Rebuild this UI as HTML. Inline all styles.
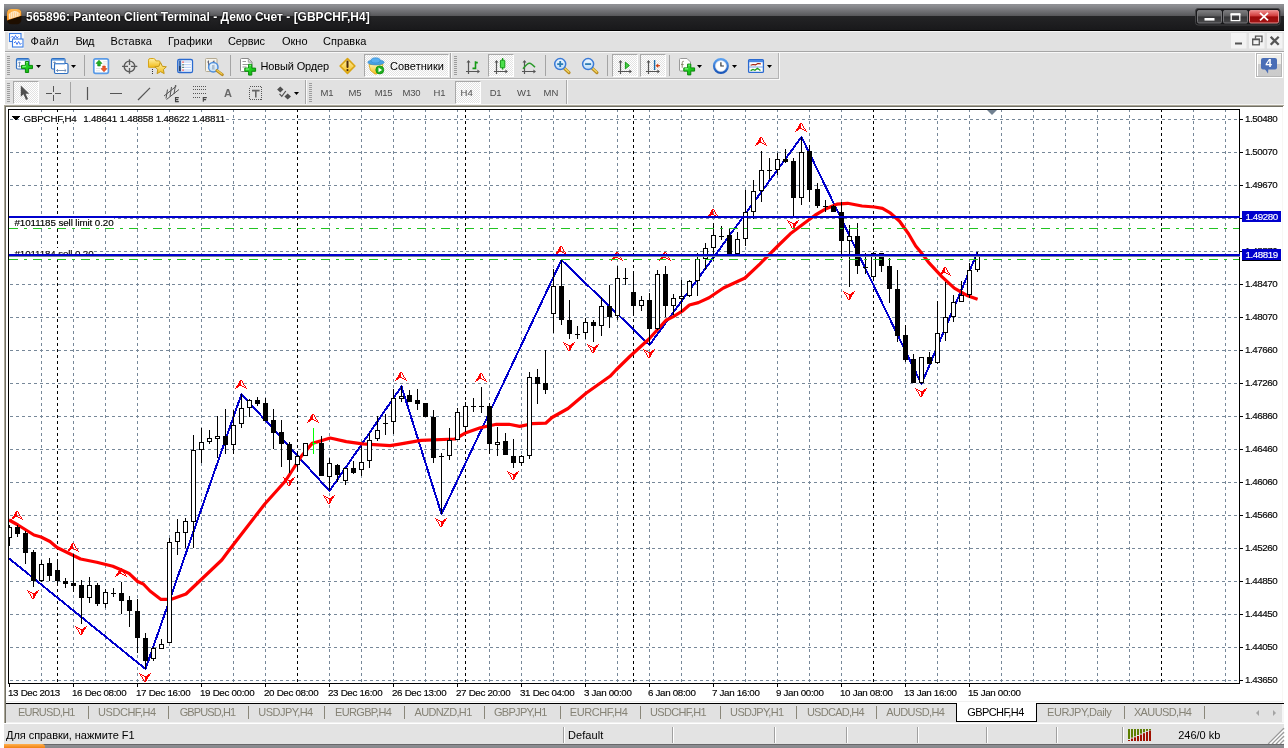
<!DOCTYPE html>
<html><head><meta charset="utf-8"><title>565896: Panteon Client Terminal</title>
<style>
html,body{margin:0;padding:0;background:#fff;}
body{width:1288px;height:748px;overflow:hidden;position:relative;font-family:"Liberation Sans",sans-serif;font-size:11px;color:#000;}
div,span{position:absolute;white-space:nowrap;box-sizing:border-box;}
#title{left:4px;top:4px;width:1280px;height:27px;background:linear-gradient(#8d8e92 0,#909195 1px,#59595c 11.5px,#555558 12px,#242426 12px,#19191b 25.5px,#000 26px,#000 27px);}
#ttext{left:26px;top:9px;font-size:12px;font-weight:bold;color:#fff;line-height:16px;text-shadow:0 0 2px #000,0 0 1px #000;}
#menu{left:5px;top:31px;width:1279px;height:20px;background:#e1e1e1;border-top:1px solid #f6f6f6;}
.mi{top:35px;line-height:13px;font-size:11px;}
#tb{left:5px;top:51px;width:1279px;height:54px;background:#e1e1e1;}
.ct{font-size:9.8px;line-height:11px;letter-spacing:-0.42px;-webkit-text-stroke:0.15px currentColor;}
.pl{left:1242px;width:39px;height:11px;background:#0000cd;color:#fff;font-size:9.8px;line-height:12px;padding-left:3.5px;letter-spacing:-0.42px;-webkit-text-stroke:0.15px currentColor;}
.chk{background-color:#f2f2f2;background-image:repeating-conic-gradient(#fff 0 25%,#e2e2e2 0 50%);background-size:2px 2px;border:1px solid;border-color:#a8a8a8 #fff #fff #a8a8a8;}
.grip{width:3px;background:repeating-linear-gradient(#9c9c9c 0,#9c9c9c 1px,transparent 1px,transparent 2px);}
.tf{top:87px;font-size:9.5px;line-height:11px;color:#4c4c4c;}
.tl{top:60px;font-size:11px;line-height:13px;}
.tab{top:706px;font-size:11px;line-height:13px;color:#858275;}
.tsep{top:706px;width:1px;height:13px;background:#8a877a;}
.ssep{top:727px;width:2px;height:16px;border-left:1px solid #a0a0a0;border-right:1px solid #fff;}
.st{top:729px;font-size:11px;line-height:13px;}
</style></head><body><div id="root" style="left:0;top:0;width:1288px;height:748px;will-change:transform">
<div id="title"></div>
<div id="ttext" class="fit">565896: Panteon Client Terminal - Демо Счет - [GBPCHF,H4]</div>
<svg width="1288" height="110" viewBox="0 0 1288 110" style="position:absolute;left:0;top:0;"><defs>
<linearGradient id="og" x1="0" y1="0" x2="0" y2="1"><stop offset="0" stop-color="#ffb64d"/><stop offset="1" stop-color="#f7901e"/></linearGradient>
<linearGradient id="bg1" x1="0" y1="0" x2="0" y2="1"><stop offset="0" stop-color="#7e7e80"/><stop offset=".45" stop-color="#5a5a5c"/><stop offset=".5" stop-color="#363638"/><stop offset="1" stop-color="#48484a"/></linearGradient>
<linearGradient id="bg2" x1="0" y1="0" x2="0" y2="1"><stop offset="0" stop-color="#f08a8a"/><stop offset=".45" stop-color="#cf3a3a"/><stop offset=".5" stop-color="#9c0a0a"/><stop offset="1" stop-color="#a01414"/></linearGradient>
</defs>
<rect x="7" y="9" width="14.4" height="15.2" rx="4.4" fill="#1e0e00"/>
<path d="M7 20.6V13.4Q7 9 11.4 9H17Q21.4 9 21.4 13.4V15.8Z" fill="url(#og)"/>
<path d="M8.8 19.2V14Q14.2 8.6 19.6 13.2V16Z" fill="#fff0d8" opacity=".9"/>
<path d="M10.6 13.2V18.4M12.6 12.4V17.8M14.6 12.2V17.2M16.6 12.5V16.6M18.4 13.4V16.2" stroke="#ffb860" stroke-width=".6"/>
<rect x="1195.5" y="8.5" width="84.5" height="16.5" rx="2.6" fill="#19191b" stroke="#444446" stroke-width="1"/>
<rect x="1197.5" y="10.5" width="24" height="12.5" rx="1.4" fill="url(#bg1)" stroke="#77777a" stroke-width="1"/>
<rect x="1223.5" y="10.5" width="24" height="12.5" rx="1.4" fill="url(#bg1)" stroke="#77777a" stroke-width="1"/>
<rect x="1249.5" y="10.5" width="29" height="12.5" rx="1.4" fill="url(#bg2)" stroke="#e89090" stroke-width="1"/>
<rect x="1204.5" y="18" width="10" height="2.6" fill="#fff"/>
<path d="M1231.2 14.5h8.6v6.2h-8.6z" fill="none" stroke="#fff" stroke-width="1.3"/><path d="M1230.6 14.2h9.8" stroke="#fff" stroke-width="2"/>
<path d="M1260 12.9l8 7.4M1268 12.9l-8 7.4" stroke="#fff" stroke-width="1.8" fill="none"/>
</svg>
<div id="menu"></div>
<div class="mi fit" style="letter-spacing:0.363px;left:30.5px">Файл</div>
<div class="mi fit" style="letter-spacing:-0.469px;left:75.5px">Вид</div>
<div class="mi fit" style="letter-spacing:0.087px;left:110.5px">Вставка</div>
<div class="mi fit" style="letter-spacing:0.109px;left:168px">Графики</div>
<div class="mi fit" style="letter-spacing:-0.112px;left:228px">Сервис</div>
<div class="mi fit" style="letter-spacing:-0.016px;left:282px">Окно</div>
<div class="mi fit" style="letter-spacing:0.049px;left:323px">Справка</div>
<svg width="1288" height="110" viewBox="0 0 1288 110" style="position:absolute;left:0;top:0;">
<rect x="8" y="32" width="16" height="17" fill="#f5f5f5"/>
<rect x="9.5" y="33.5" width="11.5" height="8" fill="#fff" stroke="#3a7ce4" stroke-width="1.1"/>
<path d="M11 37.5l1.5-1.5 1.5 2.5 1.5-3 1.5 2.5 1.5-1.5" stroke="#2e6cf0" stroke-width=".9" fill="none"/>
<rect x="12.5" y="39" width="10.5" height="8" fill="#fff" stroke="#3a7ce4" stroke-width="1.1"/>
<path d="M14 43l1.5-1.5 1.5 3 1.6-3 1.6 3 1.3-1.5" stroke="#2e6cf0" stroke-width=".9" fill="none"/>
<rect x="1231" y="33" width="15.5" height="15.5" fill="#f3f3f3"/><rect x="1249" y="33" width="15.5" height="15.5" fill="#f3f3f3"/><rect x="1267" y="33" width="15.5" height="15.5" fill="#f3f3f3"/>
<rect x="1235" y="42.5" width="7" height="2" fill="#555"/>
<path d="M1255.5 38.8v-2.6h6.5v5.5h-1.5" fill="none" stroke="#555" stroke-width="1.3"/><rect x="1252.7" y="39.5" width="6.6" height="5.3" fill="none" stroke="#555" stroke-width="1.3"/><path d="M1252 39.3h8" stroke="#555" stroke-width="1.6"/>
<path d="M1270.7 36.7l8 8M1278.7 36.7l-8 8" stroke="#555" stroke-width="2.3" fill="none"/>
</svg>
<div id="tb"></div>
<div style="left:5px;top:51px;width:1279px;height:1px;background:#a5a5a5"></div>
<div style="left:5px;top:52px;width:1279px;height:1px;background:#f8f8f8"></div>
<div style="left:5px;top:78px;width:774px;height:1px;background:#b4b4b4"></div>
<div style="left:5px;top:79px;width:775px;height:1px;background:#f8f8f8"></div>
<div style="left:778px;top:53px;width:1px;height:26px;background:#b4b4b4"></div>
<div style="left:779px;top:53px;width:1px;height:27px;background:#f8f8f8"></div>
<div style="left:566px;top:80px;width:1px;height:24px;background:#a8a8a8"></div>
<div style="left:567px;top:80px;width:1px;height:24px;background:#f8f8f8"></div>
<div style="left:5px;top:104px;width:1279px;height:1px;background:#f4f4f4"></div>
<div style="left:4px;top:105px;width:1280px;height:1px;background:#aca899"></div>
<div style="left:5px;top:106px;width:1278px;height:1px;background:#716f64"></div>
<div style="left:4px;top:105px;width:1px;height:618px;background:#aca899"></div>
<div style="left:5px;top:106px;width:1px;height:617px;background:#716f64"></div>
<div style="left:1282px;top:107px;width:1px;height:596px;background:#f7f7f5"></div>
<div class="grip" style="left:7px;top:56px;height:19px"></div>
<div class="grip" style="left:454px;top:56px;height:19px"></div>
<div class="grip" style="left:7px;top:83px;height:19px"></div>
<div class="grip" style="left:309px;top:83px;height:19px"></div>
<div class="chk" style="left:364px;top:54px;width:85px;height:23px"></div>
<div class="chk" style="left:488px;top:54px;width:26px;height:23px"></div>
<div class="chk" style="left:612px;top:54px;width:26px;height:23px"></div>
<div class="chk" style="left:640px;top:54px;width:26px;height:23px"></div>
<div class="chk" style="left:13px;top:81px;width:26px;height:23px"></div>
<div class="chk" style="left:455px;top:81px;width:26px;height:23px"></div>
<div style="left:1255px;top:52px;width:28px;height:26px;background:#fff"></div><div style="left:1256px;top:53px;width:26px;height:24px;background:linear-gradient(#f0efeb 0,#efeeea 45%,#cdcdcd 45%,#cbcbcb 100%);border:1px solid #b6b6b6;box-shadow:inset 1px 1px 0 #fff"></div>
<div class="tl fit" style="letter-spacing:-0.145px;left:260.5px">Новый Ордер</div>
<div class="tl fit" style="letter-spacing:0.028px;left:390px">Советники</div>
<div class="fit" style="letter-spacing:-0.553px;left:224px;top:87px;font-size:11px;line-height:13px;color:#6a6a6a;font-weight:bold">A</div>
<div style="left:1265.6px;top:57px;font-size:11.5px;font-weight:bold;line-height:13px;color:#fff;z-index:5">4</div>
<svg width="1288" height="110" viewBox="0 0 1288 110" style="position:absolute;left:0;top:0;"><defs>
<linearGradient id="gp" x1="0" y1="0" x2="1" y2="1"><stop offset="0" stop-color="#5cf05c"/><stop offset=".5" stop-color="#1fd01f"/><stop offset="1" stop-color="#0aa00a"/></linearGradient>
<linearGradient id="yg" x1="0" y1="0" x2="0" y2="1"><stop offset="0" stop-color="#fff2a8"/><stop offset="1" stop-color="#f2bc1a"/></linearGradient>
<linearGradient id="bl" x1="0" y1="0" x2="0" y2="1"><stop offset="0" stop-color="#5aa0f0"/><stop offset="1" stop-color="#1a56b8"/></linearGradient>
<linearGradient id="lens" x1="0" y1="0" x2="0" y2="1"><stop offset="0" stop-color="#f0f8ff"/><stop offset="1" stop-color="#bcdcf8"/></linearGradient>
</defs><rect x="16.5" y="58.5" width="12.5" height="10.5" rx="1.2" fill="#fff" stroke="#2f6fc0" stroke-width="1.2"/><rect x="17" y="59" width="11.5" height="1.6" fill="#5a98e0"/><path d="M19.5 62v5M18.2 63.3l1.3-1.5 1.3 1.5M18.2 65.7l1.3 1.5 1.3-1.5" stroke="#6a88b0" stroke-width=".9" fill="none"/><path d="M25.4 61.5h3.2v3.9h3.9v3.2h-3.9v3.9h-3.2v-3.9h-3.9v-3.2h3.9z" fill="url(#gp)" stroke="#0b8a0b" stroke-width="1" stroke-linejoin="round"/><path d="M26.299999999999997 62.5h1.4000000000000001M22.5 66.30000000000001h3.4" stroke="#9dff9d" stroke-width=".9" fill="none"/><path d="M36 65h5l-2.5 3z" fill="#000"/><rect x="51.5" y="58.5" width="13.5" height="10.5" rx="1.2" fill="#fff" stroke="#2f6fc0" stroke-width="1.2"/><rect x="52" y="59" width="12.5" height="1.6" fill="#5a98e0"/><path d="M54.5 62v3.5M53.3 63l1.2-1.3 1.2 1.3M55 66.5h7.5M61.3 65.3l1.4 1.2-1.4 1.2M56.2 65.3l-1.4 1.2 1.4 1.2" stroke="#6a88b0" stroke-width=".9" fill="none"/><rect x="54.5" y="63.5" width="13.5" height="10" rx="1.2" fill="#fff" stroke="#2f6fc0" stroke-width="1.2"/><path d="M56.5 70.5h9.5M64.6 69.2l1.5 1.3-1.5 1.3M58 69.2l-1.5 1.3 1.5 1.3" stroke="#6a88b0" stroke-width=".9" fill="none"/><path d="M55 64.2h10" stroke="#9cc0ee" stroke-width="1"/><path d="M71 65h5l-2.5 3z" fill="#000"/><rect x="84" y="55" width="1" height="21" fill="#a4a4a4"/><rect x="230" y="55" width="1" height="21" fill="#a4a4a4"/><rect x="545" y="55" width="1" height="21" fill="#a4a4a4"/><rect x="607" y="55" width="1" height="21" fill="#a4a4a4"/><rect x="669" y="55" width="1" height="21" fill="#a4a4a4"/><rect x="93.8" y="58.8" width="14.6" height="14.6" rx="1.8" fill="#fff" stroke="#5b9be6" stroke-width="1.7"/><path d="M96 68.5h4M96 70.8h4M103 61.8h4M103 64h4" stroke="#ddd" stroke-width=".8"/><path d="M99 60.2l3 3.2h-1.7v2.6h-2.6v-2.6h-1.7z" fill="#22b022" stroke="#0e8a0e" stroke-width=".6"/><path d="M104 71.8l3-3.2h-1.7v-2.6h-2.6v2.6h-1.7z" fill="#f05a28" stroke="#c83a10" stroke-width=".6"/><circle cx="129.5" cy="66.4" r="5.3" fill="none" stroke="#5c5c5c" stroke-width="1.4"/><path d="M122 66.4h6M131 66.4h6.3M129.5 59.3v5.6M129.5 68v5.8" stroke="#5c5c5c" stroke-width="1.3" fill="none"/><path d="M148.5 60.2q0-1.7 1.7-1.7h3.3q1.3 0 1.9 1.4l.4 1h3.2q1 0 1 1v5.4h-11.5z" fill="url(#yg)" stroke="#d6a419" stroke-width="1"/><path d="M152.5 69v5" stroke="#333" stroke-width="1" stroke-dasharray="1 1"/><path d="M160.6 62.6l1.75 3.7 4 .5-2.95 2.8.75 4-3.55-1.95-3.55 1.95.75-4-2.95-2.8 4-.5z" fill="url(#yg)" stroke="#c49718" stroke-width="1" stroke-linejoin="round"/><rect x="177.7" y="59.5" width="14.8" height="13" rx="1.6" fill="#fff" stroke="#2a6ad0" stroke-width="1.3"/><rect x="178.6" y="60.4" width="2.6" height="11.2" fill="#3e6fb6"/><rect x="179.3" y="66" width="1.2" height="5" fill="#1c2c48"/><path d="M183.5 62h7.5M183.5 64.7h7.5M183.5 67.3h7.5M183.5 70h7.5" stroke="#a8c4f4" stroke-width=".9"/><rect x="182.4" y="61.5" width="1.2" height="1.2" fill="#e00"/><rect x="182.4" y="64.2" width="1.2" height="1.2" fill="#143"/><rect x="182.4" y="66.8" width="1.2" height="1.2" fill="#143"/><rect x="182.4" y="69.5" width="1.2" height="1.2" fill="#e00"/><rect x="205.5" y="58.5" width="11.5" height="13" rx="1" fill="#f6f3ea" stroke="#b4aa92" stroke-width="1"/><path d="M208.5 60.5v6M207.3 62h1.2M208.5 64.5h1.2M214 60.5v5M212.8 61.5h1.2M214 64h1.2" stroke="#667" stroke-width="1" fill="none"/><circle cx="213.3" cy="67.2" r="4.7" fill="url(#lens)" fill-opacity=".9" stroke="#4f8fdc" stroke-width="1.5"/><path d="M212 65v4.5h2.5V65" fill="#9ab" stroke="none" opacity=".7"/><path d="M216.9 70.6l5.4 4" stroke="#b88a20" stroke-width="3" stroke-linecap="round"/><path d="M217.2 70.5l4.8 3.6" stroke="#f0cc50" stroke-width="1.2" stroke-linecap="round"/><path d="M240.5 59.5q0-1 1-1h7l3.5 3.5v8.5q0 1-1 1h-9.5q-1 0-1-1z" fill="#fff" stroke="#8a8a8a" stroke-width="1"/><path d="M248.3 58.7v3.5h3.5" fill="#ddd" stroke="#8a8a8a" stroke-width=".8"/><path d="M242.5 61.5h3.5M242.5 64.5h7M242.5 67h4" stroke="#999" stroke-width="1.1"/><path d="M248.6 64.3h3.2v3.8000000000000003h3.8000000000000003v3.2h-3.8000000000000003v3.8000000000000003h-3.2v-3.8000000000000003h-3.8000000000000003v-3.2h3.8000000000000003z" fill="url(#gp)" stroke="#0b8a0b" stroke-width="1" stroke-linejoin="round"/><path d="M249.5 65.3h1.4000000000000001M245.79999999999998 69.00000000000001h3.3000000000000003" stroke="#9dff9d" stroke-width=".9" fill="none"/><path d="M347.5 58.6L354.9 66L347.5 73.4L340.1 66Z" fill="url(#yg)" stroke="#d9a514" stroke-width="1.6" stroke-linejoin="round"/><path d="M347.5 61.4v5.6" stroke="#4a2a08" stroke-width="2" stroke-linecap="round"/><circle cx="347.5" cy="70.1" r="1.1" fill="#4a2a08"/><path d="M369 64.5h14l-1.5 6-5 3.5h-1.5l-4.5-3.5z" fill="url(#yg)" stroke="#d9a514" stroke-width=".8"/><ellipse cx="376" cy="62.3" rx="8.2" ry="2.6" fill="#4aa2e2" stroke="#2f86cc" stroke-width=".6"/><ellipse cx="375.6" cy="60.4" rx="4.6" ry="2.6" fill="#58aef0" stroke="#2f86cc" stroke-width=".6"/><circle cx="379.8" cy="69.9" r="4" fill="#20b020" stroke="#0c8c0c" stroke-width=".8"/><path d="M378.5 67.6v4.6l3.6-2.3z" fill="#fff"/><rect x="450" y="53" width="1" height="25" fill="#a8a8a8"/><rect x="451" y="53" width="1" height="25" fill="#f8f8f8"/><path d="M468.5 61V74.0M466 71.5H479" stroke="#555" stroke-width="1.2" fill="none"/><path d="M466.5 62.6L468.5 60L470.5 62.6Z M477.4 69.5L480 71.5L477.4 73.5Z" fill="#555"/><path d="M475.5 61.2v8M475.5 62.6h2.3M472.5 68.4h3" stroke="#169a16" stroke-width="1.6" fill="none"/><path d="M496.5 61V74.0M494 71.5H507" stroke="#555" stroke-width="1.2" fill="none"/><path d="M494.5 62.6L496.5 60L498.5 62.6Z M505.4 69.5L508 71.5L505.4 73.5Z" fill="#555"/><path d="M502.6 58v11.6" stroke="#169a16" stroke-width="1.3"/><rect x="500.4" y="60.2" width="4.4" height="7.6" rx=".6" fill="#4be04b" stroke="#169a16" stroke-width="1"/><path d="M524.5 61V74.0M522 71.5H535" stroke="#555" stroke-width="1.2" fill="none"/><path d="M522.5 62.6L524.5 60L526.5 62.6Z M533.4 69.5L536 71.5L533.4 73.5Z" fill="#555"/><path d="M523 68.8Q527.5 63 529.5 63.2T535 67.2" stroke="#2a9a2a" stroke-width="1.5" fill="none"/><path d="M564.4000000000001 68.3l4.6 4.3" stroke="#b88a20" stroke-width="3.2" stroke-linecap="round"/><path d="M564.6 68.2l4.2 3.9" stroke="#f4d860" stroke-width="1.3" stroke-linecap="round"/><circle cx="560.2" cy="64.1" r="5.5" fill="url(#lens)" stroke="#3a7ad6" stroke-width="1.5"/><path d="M557.2 64.1h6M560.2 61.1v6" stroke="#2c7cb4" stroke-width="1.8" fill="none"/><path d="M592.3000000000001 68.3l4.6 4.3" stroke="#b88a20" stroke-width="3.2" stroke-linecap="round"/><path d="M592.5 68.2l4.2 3.9" stroke="#f4d860" stroke-width="1.3" stroke-linecap="round"/><circle cx="588.1" cy="64.1" r="5.5" fill="url(#lens)" stroke="#3a7ad6" stroke-width="1.5"/><path d="M585.1 64.1h6" stroke="#2c7cb4" stroke-width="1.8" fill="none"/><path d="M620.5 61V74.0M618 71.5H631" stroke="#555" stroke-width="1.2" fill="none"/><path d="M618.5 62.6L620.5 60L622.5 62.6Z M629.4 69.5L632 71.5L629.4 73.5Z" fill="#555"/><path d="M625.4 62.2v6.6l4-3.3z" fill="#46d046" stroke="#169a16" stroke-width="1" stroke-linejoin="round"/><path d="M648.5 61V74.0M646 71.5H659" stroke="#555" stroke-width="1.2" fill="none"/><path d="M646.5 62.6L648.5 60L650.5 62.6Z M657.4 69.5L660 71.5L657.4 73.5Z" fill="#555"/><path d="M654.6 60v10" stroke="#1a6aa8" stroke-width="1.4"/><path d="M660 65.7h-3" stroke="#d04010" stroke-width="1.2"/><path d="M655.6 65.7l2.6-2.2v4.4z" fill="#d04010"/><path d="M679.5 59.5q0-1 1-1h6.5l3.5 3.5v8q0 1-1 1h-9q-1 0-1-1z" fill="#fff" stroke="#9a9a9a" stroke-width="1"/><path d="M683.8 61.3q-1.6-.3-1.6 1.5v5M681 64.5h2.6" stroke="#8a8a70" stroke-width="1" fill="none"/><path d="M687.6 64.1h3.2v3.8000000000000003h3.8000000000000003v3.2h-3.8000000000000003v3.8000000000000003h-3.2v-3.8000000000000003h-3.8000000000000003v-3.2h3.8000000000000003z" fill="url(#gp)" stroke="#0b8a0b" stroke-width="1" stroke-linejoin="round"/><path d="M688.5 65.1h1.4000000000000001M684.8000000000001 68.80000000000001h3.3000000000000003" stroke="#9dff9d" stroke-width=".9" fill="none"/><path d="M697 65h5l-2.5 3z" fill="#000"/><circle cx="720.9" cy="66" r="6.8" fill="#fff" stroke="url(#bl)" stroke-width="2.4"/><circle cx="720.9" cy="66" r="5.4" fill="none" stroke="#d0d8e8" stroke-width=".6"/><path d="M720.9 62.2v3.8h3" stroke="#333" stroke-width="1.2" fill="none"/><path d="M732 65h5l-2.5 3z" fill="#000"/><rect x="748.6" y="59.6" width="14.8" height="12.8" rx="1" fill="#fff" stroke="#2a6ad0" stroke-width="1.3"/><rect x="749" y="60" width="14" height="2.2" fill="#4a88e4"/><path d="M749 67h14" stroke="#7aa6ea" stroke-width="1"/><path d="M750.6 65.3l2.4-.8 2.4.4 2.4-1.4 3 .3" stroke="#a01808" stroke-width="1.2" fill="none"/><path d="M750.6 70.6l2.4-1.2 2 .9 2.4-2 3 2.2" stroke="#1a9a1a" stroke-width="1.2" fill="none"/><path d="M767 65h5l-2.5 3z" fill="#000"/><path d="M20.8 85.6V96.8L23.5 94.3L26 100L28 99.1L25.6 93.8L29.2 93.8Z" fill="#505050"/><path d="M46 93.5h6M55 93.5h6M53.5 86v6M53.5 95v6" stroke="#555" stroke-width="1" fill="none" shape-rendering="crispEdges"/><rect x="70" y="82" width="1" height="21" fill="#a4a4a4"/><path d="M87.5 87v13M110 93.5h12" stroke="#555" stroke-width="1.2" fill="none"/><path d="M138 100L150 87.8" stroke="#555" stroke-width="1.2" fill="none"/><path d="M164 96L176.5 86M166.5 99.5L179 89.5M167.5 89.5L166 98.5M171.5 87L170 96.5M175.5 85L174 94" stroke="#555" stroke-width="1" fill="none"/><path d="M178.8 97.6h-3.3v4h3.3M175.5 99.6h2.8" stroke="#444" stroke-width="1.1" fill="none"/><path d="M193 86.5h13.5M193 89.5h13.5M193 93.5h13.5" stroke="#555" stroke-width="1" stroke-dasharray="1 1" fill="none" shape-rendering="crispEdges"/><path d="M193 97.5h8" stroke="#555" stroke-width="1" stroke-dasharray="1 1" fill="none" shape-rendering="crispEdges"/><path d="M206.8 97.6h-3.5v4.2M203.3 99.6h2.8" stroke="#444" stroke-width="1.1" fill="none"/><rect x="249.5" y="86.5" width="12" height="13" fill="none" stroke="#555" stroke-width="1" stroke-dasharray="1 1" shape-rendering="crispEdges"/><path d="M252 90.6h7.6M255.8 90.6v7" stroke="#666" stroke-width="1.6" fill="none"/><path d="M280.3 86.4l3.2 3.1-3.2 3.1-3.2-3.1zM287.7 93.4l3.3 3.1-3.3 3.1-3.3-3.1z" fill="#505050"/><path d="M279.5 93.8l2.3 2.6 4-5.4" stroke="#505050" stroke-width="1.2" fill="none"/><path d="M294 92h5l-2.5 3z" fill="#000"/><rect x="305" y="80" width="1" height="24" fill="#a8a8a8"/><rect x="306" y="80" width="1" height="24" fill="#f8f8f8"/><rect x="1261" y="58" width="16" height="11.6" rx="2" fill="#4a6eb6"/><path d="M1264.8 69L1268 73.6L1268.3 69z" fill="#4a6eb6"/></svg>
<div class="tf fit" style="letter-spacing:-0.202px;left:320.5px">M1</div>
<div class="tf fit" style="letter-spacing:-0.152px;left:348.5px">M5</div>
<div class="tf fit" style="letter-spacing:-0.361px;left:374.8px">M15</div>
<div class="tf fit" style="letter-spacing:-0.261px;left:402.5px">M30</div>
<div class="tf fit" style="letter-spacing:-0.228px;left:433.5px">H1</div>
<div class="tf fit" style="letter-spacing:0.172px;left:460.5px">H4</div>
<div class="tf fit" style="letter-spacing:-0.278px;left:489.7px">D1</div>
<div class="tf fit" style="letter-spacing:-0.025px;left:517px">W1</div>
<div class="tf fit" style="letter-spacing:0.009px;left:543.5px">MN</div>
<svg id="chart" width="1288" height="748" viewBox="0 0 1288 748" shape-rendering="crispEdges" style="position:absolute;left:0;top:0">
<rect x="8" y="109" width="1232" height="575" fill="#fff"/>
<path d="M10 119.5H1239 M10 152.5H1239 M10 185.5H1239 M10 218.5H1239 M10 251.5H1239 M10 284.5H1239 M10 317.5H1239 M10 350.5H1239 M10 383.5H1239 M10 416.5H1239 M10 449.5H1239 M10 482.5H1239 M10 515.5H1239 M10 548.5H1239 M10 581.5H1239 M10 614.5H1239 M10 647.5H1239 M10 680.5H1239" stroke="#778899" stroke-width="1" stroke-dasharray="3 3" fill="none"/>
<path d="M41.5 109V683 M73.5 109V683 M105.5 109V683 M137.5 109V683 M169.5 109V683 M201.5 109V683 M233.5 109V683 M265.5 109V683 M329.5 109V683 M361.5 109V683 M393.5 109V683 M425.5 109V683 M457.5 109V683 M489.5 109V683 M521.5 109V683 M553.5 109V683 M585.5 109V683 M617.5 109V683 M649.5 109V683 M681.5 109V683 M713.5 109V683 M745.5 109V683 M777.5 109V683 M809.5 109V683 M841.5 109V683 M905.5 109V683 M937.5 109V683 M969.5 109V683 M1001.5 109V683 M1033.5 109V683 M1065.5 109V683 M1097.5 109V683 M1129.5 109V683 M1193.5 109V683 M1225.5 109V683" stroke="#778899" stroke-width="1" stroke-dasharray="3 3" fill="none"/>
<path d="M57.5 109V683 M297.5 109V683 M465.5 109V683 M633.5 109V683 M873.5 109V683 M1161.5 109V683" stroke="#000" stroke-width="1" stroke-dasharray="3 3" fill="none"/>
<rect x="23" y="113" width="203" height="10" fill="#fff"/><rect x="9" y="218" width="105" height="10" fill="#fff"/><rect x="9" y="248" width="85" height="10" fill="#fff"/>
<rect x="8.5" y="109.5" width="1231" height="574" fill="none" stroke="#000" stroke-width="1"/>
<path d="M1240 119.5h3 M1240 152.5h3 M1240 185.5h3 M1240 218.5h3 M1240 251.5h3 M1240 284.5h3 M1240 317.5h3 M1240 350.5h3 M1240 383.5h3 M1240 416.5h3 M1240 449.5h3 M1240 482.5h3 M1240 515.5h3 M1240 548.5h3 M1240 581.5h3 M1240 614.5h3 M1240 647.5h3 M1240 680.5h3 M9.5 684v3 M73.5 684v3 M137.5 684v3 M201.5 684v3 M265.5 684v3 M329.5 684v3 M393.5 684v3 M457.5 684v3 M521.5 684v3 M585.5 684v3 M649.5 684v3 M713.5 684v3 M777.5 684v3 M841.5 684v3 M905.5 684v3 M969.5 684v3" stroke="#000" stroke-width="1" fill="none"/>
<path d="M16 511h2v1h-2zM15 512h2v1h-2zM18 512h1v1h-1zM15 513h2v1h-2zM18 513h1v1h-1zM14 514h3v1h-3zM19 514h1v1h-1zM14 515h3v1h-3zM19 515h1v1h-1zM13 516h5v1h-5zM20 516h1v1h-1zM12 517h3v1h-3zM18 517h2v1h-2zM21 517h1v1h-1zM12 518h2v1h-2zM20 518h2v1h-2zM11 519h1v1h-1zM22 519h1v1h-1zM72 543h2v1h-2zM71 544h2v1h-2zM74 544h1v1h-1zM71 545h2v1h-2zM74 545h1v1h-1zM70 546h3v1h-3zM75 546h1v1h-1zM70 547h3v1h-3zM75 547h1v1h-1zM69 548h5v1h-5zM76 548h1v1h-1zM68 549h3v1h-3zM74 549h2v1h-2zM77 549h1v1h-1zM68 550h2v1h-2zM76 550h2v1h-2zM67 551h1v1h-1zM78 551h1v1h-1zM120 568h2v1h-2zM119 569h2v1h-2zM122 569h1v1h-1zM119 570h2v1h-2zM122 570h1v1h-1zM118 571h3v1h-3zM123 571h1v1h-1zM118 572h3v1h-3zM123 572h1v1h-1zM117 573h5v1h-5zM124 573h1v1h-1zM116 574h3v1h-3zM122 574h2v1h-2zM125 574h1v1h-1zM116 575h2v1h-2zM124 575h2v1h-2zM115 576h1v1h-1zM126 576h1v1h-1zM240 380h2v1h-2zM239 381h2v1h-2zM242 381h1v1h-1zM239 382h2v1h-2zM242 382h1v1h-1zM238 383h3v1h-3zM243 383h1v1h-1zM238 384h3v1h-3zM243 384h1v1h-1zM237 385h5v1h-5zM244 385h1v1h-1zM236 386h3v1h-3zM242 386h2v1h-2zM245 386h1v1h-1zM236 387h2v1h-2zM244 387h2v1h-2zM235 388h1v1h-1zM246 388h1v1h-1zM312 414h2v1h-2zM311 415h2v1h-2zM314 415h1v1h-1zM311 416h2v1h-2zM314 416h1v1h-1zM310 417h3v1h-3zM315 417h1v1h-1zM310 418h3v1h-3zM315 418h1v1h-1zM309 419h5v1h-5zM316 419h1v1h-1zM308 420h3v1h-3zM314 420h2v1h-2zM317 420h1v1h-1zM308 421h2v1h-2zM316 421h2v1h-2zM307 422h1v1h-1zM318 422h1v1h-1zM400 372h2v1h-2zM399 373h2v1h-2zM402 373h1v1h-1zM399 374h2v1h-2zM402 374h1v1h-1zM398 375h3v1h-3zM403 375h1v1h-1zM398 376h3v1h-3zM403 376h1v1h-1zM397 377h5v1h-5zM404 377h1v1h-1zM396 378h3v1h-3zM402 378h2v1h-2zM405 378h1v1h-1zM396 379h2v1h-2zM404 379h2v1h-2zM395 380h1v1h-1zM406 380h1v1h-1zM480 373h2v1h-2zM479 374h2v1h-2zM482 374h1v1h-1zM479 375h2v1h-2zM482 375h1v1h-1zM478 376h3v1h-3zM483 376h1v1h-1zM478 377h3v1h-3zM483 377h1v1h-1zM477 378h5v1h-5zM484 378h1v1h-1zM476 379h3v1h-3zM482 379h2v1h-2zM485 379h1v1h-1zM476 380h2v1h-2zM484 380h2v1h-2zM475 381h1v1h-1zM486 381h1v1h-1zM560 246h2v1h-2zM559 247h2v1h-2zM562 247h1v1h-1zM559 248h2v1h-2zM562 248h1v1h-1zM558 249h3v1h-3zM563 249h1v1h-1zM558 250h3v1h-3zM563 250h1v1h-1zM557 251h5v1h-5zM564 251h1v1h-1zM556 252h3v1h-3zM562 252h2v1h-2zM565 252h1v1h-1zM556 253h2v1h-2zM564 253h2v1h-2zM555 254h1v1h-1zM566 254h1v1h-1zM616 252h2v1h-2zM615 253h2v1h-2zM618 253h1v1h-1zM615 254h2v1h-2zM618 254h1v1h-1zM614 255h3v1h-3zM619 255h1v1h-1zM614 256h3v1h-3zM619 256h1v1h-1zM613 257h5v1h-5zM620 257h1v1h-1zM612 258h3v1h-3zM618 258h2v1h-2zM621 258h1v1h-1zM612 259h2v1h-2zM620 259h2v1h-2zM611 260h1v1h-1zM622 260h1v1h-1zM664 252h2v1h-2zM663 253h2v1h-2zM666 253h1v1h-1zM663 254h2v1h-2zM666 254h1v1h-1zM662 255h3v1h-3zM667 255h1v1h-1zM662 256h3v1h-3zM667 256h1v1h-1zM661 257h5v1h-5zM668 257h1v1h-1zM660 258h3v1h-3zM666 258h2v1h-2zM669 258h1v1h-1zM660 259h2v1h-2zM668 259h2v1h-2zM659 260h1v1h-1zM670 260h1v1h-1zM712 209h2v1h-2zM711 210h2v1h-2zM714 210h1v1h-1zM711 211h2v1h-2zM714 211h1v1h-1zM710 212h3v1h-3zM715 212h1v1h-1zM710 213h3v1h-3zM715 213h1v1h-1zM709 214h5v1h-5zM716 214h1v1h-1zM708 215h3v1h-3zM714 215h2v1h-2zM717 215h1v1h-1zM708 216h2v1h-2zM716 216h2v1h-2zM707 217h1v1h-1zM718 217h1v1h-1zM760 137h2v1h-2zM759 138h2v1h-2zM762 138h1v1h-1zM759 139h2v1h-2zM762 139h1v1h-1zM758 140h3v1h-3zM763 140h1v1h-1zM758 141h3v1h-3zM763 141h1v1h-1zM757 142h5v1h-5zM764 142h1v1h-1zM756 143h3v1h-3zM762 143h2v1h-2zM765 143h1v1h-1zM756 144h2v1h-2zM764 144h2v1h-2zM755 145h1v1h-1zM766 145h1v1h-1zM800 123h2v1h-2zM799 124h2v1h-2zM802 124h1v1h-1zM799 125h2v1h-2zM802 125h1v1h-1zM798 126h3v1h-3zM803 126h1v1h-1zM798 127h3v1h-3zM803 127h1v1h-1zM797 128h5v1h-5zM804 128h1v1h-1zM796 129h3v1h-3zM802 129h2v1h-2zM805 129h1v1h-1zM796 130h2v1h-2zM804 130h2v1h-2zM795 131h1v1h-1zM806 131h1v1h-1zM944 267h2v1h-2zM943 268h2v1h-2zM946 268h1v1h-1zM943 269h2v1h-2zM946 269h1v1h-1zM942 270h3v1h-3zM947 270h1v1h-1zM942 271h3v1h-3zM947 271h1v1h-1zM941 272h5v1h-5zM948 272h1v1h-1zM940 273h3v1h-3zM946 273h2v1h-2zM949 273h1v1h-1zM940 274h2v1h-2zM948 274h2v1h-2zM939 275h1v1h-1zM950 275h1v1h-1zM32 598h2v1h-2zM33 597h2v1h-2zM31 597h1v1h-1zM33 596h2v1h-2zM31 596h1v1h-1zM33 595h3v1h-3zM30 595h1v1h-1zM33 594h3v1h-3zM30 594h1v1h-1zM32 593h5v1h-5zM29 593h1v1h-1zM35 592h3v1h-3zM30 592h2v1h-2zM28 592h1v1h-1zM36 591h2v1h-2zM28 591h2v1h-2zM38 590h1v1h-1zM27 590h1v1h-1zM80 634h2v1h-2zM81 633h2v1h-2zM79 633h1v1h-1zM81 632h2v1h-2zM79 632h1v1h-1zM81 631h3v1h-3zM78 631h1v1h-1zM81 630h3v1h-3zM78 630h1v1h-1zM80 629h5v1h-5zM77 629h1v1h-1zM83 628h3v1h-3zM78 628h2v1h-2zM76 628h1v1h-1zM84 627h2v1h-2zM76 627h2v1h-2zM86 626h1v1h-1zM75 626h1v1h-1zM144 681h2v1h-2zM145 680h2v1h-2zM143 680h1v1h-1zM145 679h2v1h-2zM143 679h1v1h-1zM145 678h3v1h-3zM142 678h1v1h-1zM145 677h3v1h-3zM142 677h1v1h-1zM144 676h5v1h-5zM141 676h1v1h-1zM147 675h3v1h-3zM142 675h2v1h-2zM140 675h1v1h-1zM148 674h2v1h-2zM140 674h2v1h-2zM150 673h1v1h-1zM139 673h1v1h-1zM288 485h2v1h-2zM289 484h2v1h-2zM287 484h1v1h-1zM289 483h2v1h-2zM287 483h1v1h-1zM289 482h3v1h-3zM286 482h1v1h-1zM289 481h3v1h-3zM286 481h1v1h-1zM288 480h5v1h-5zM285 480h1v1h-1zM291 479h3v1h-3zM286 479h2v1h-2zM284 479h1v1h-1zM292 478h2v1h-2zM284 478h2v1h-2zM294 477h1v1h-1zM283 477h1v1h-1zM328 503h2v1h-2zM329 502h2v1h-2zM327 502h1v1h-1zM329 501h2v1h-2zM327 501h1v1h-1zM329 500h3v1h-3zM326 500h1v1h-1zM329 499h3v1h-3zM326 499h1v1h-1zM328 498h5v1h-5zM325 498h1v1h-1zM331 497h3v1h-3zM326 497h2v1h-2zM324 497h1v1h-1zM332 496h2v1h-2zM324 496h2v1h-2zM334 495h1v1h-1zM323 495h1v1h-1zM440 526h2v1h-2zM441 525h2v1h-2zM439 525h1v1h-1zM441 524h2v1h-2zM439 524h1v1h-1zM441 523h3v1h-3zM438 523h1v1h-1zM441 522h3v1h-3zM438 522h1v1h-1zM440 521h5v1h-5zM437 521h1v1h-1zM443 520h3v1h-3zM438 520h2v1h-2zM436 520h1v1h-1zM444 519h2v1h-2zM436 519h2v1h-2zM446 518h1v1h-1zM435 518h1v1h-1zM512 479h2v1h-2zM513 478h2v1h-2zM511 478h1v1h-1zM513 477h2v1h-2zM511 477h1v1h-1zM513 476h3v1h-3zM510 476h1v1h-1zM513 475h3v1h-3zM510 475h1v1h-1zM512 474h5v1h-5zM509 474h1v1h-1zM515 473h3v1h-3zM510 473h2v1h-2zM508 473h1v1h-1zM516 472h2v1h-2zM508 472h2v1h-2zM518 471h1v1h-1zM507 471h1v1h-1zM568 350h2v1h-2zM569 349h2v1h-2zM567 349h1v1h-1zM569 348h2v1h-2zM567 348h1v1h-1zM569 347h3v1h-3zM566 347h1v1h-1zM569 346h3v1h-3zM566 346h1v1h-1zM568 345h5v1h-5zM565 345h1v1h-1zM571 344h3v1h-3zM566 344h2v1h-2zM564 344h1v1h-1zM572 343h2v1h-2zM564 343h2v1h-2zM574 342h1v1h-1zM563 342h1v1h-1zM592 352h2v1h-2zM593 351h2v1h-2zM591 351h1v1h-1zM593 350h2v1h-2zM591 350h1v1h-1zM593 349h3v1h-3zM590 349h1v1h-1zM593 348h3v1h-3zM590 348h1v1h-1zM592 347h5v1h-5zM589 347h1v1h-1zM595 346h3v1h-3zM590 346h2v1h-2zM588 346h1v1h-1zM596 345h2v1h-2zM588 345h2v1h-2zM598 344h1v1h-1zM587 344h1v1h-1zM648 357h2v1h-2zM649 356h2v1h-2zM647 356h1v1h-1zM649 355h2v1h-2zM647 355h1v1h-1zM649 354h3v1h-3zM646 354h1v1h-1zM649 353h3v1h-3zM646 353h1v1h-1zM648 352h5v1h-5zM645 352h1v1h-1zM651 351h3v1h-3zM646 351h2v1h-2zM644 351h1v1h-1zM652 350h2v1h-2zM644 350h2v1h-2zM654 349h1v1h-1zM643 349h1v1h-1zM792 228h2v1h-2zM793 227h2v1h-2zM791 227h1v1h-1zM793 226h2v1h-2zM791 226h1v1h-1zM793 225h3v1h-3zM790 225h1v1h-1zM793 224h3v1h-3zM790 224h1v1h-1zM792 223h5v1h-5zM789 223h1v1h-1zM795 222h3v1h-3zM790 222h2v1h-2zM788 222h1v1h-1zM796 221h2v1h-2zM788 221h2v1h-2zM798 220h1v1h-1zM787 220h1v1h-1zM848 299h2v1h-2zM849 298h2v1h-2zM847 298h1v1h-1zM849 297h2v1h-2zM847 297h1v1h-1zM849 296h3v1h-3zM846 296h1v1h-1zM849 295h3v1h-3zM846 295h1v1h-1zM848 294h5v1h-5zM845 294h1v1h-1zM851 293h3v1h-3zM846 293h2v1h-2zM844 293h1v1h-1zM852 292h2v1h-2zM844 292h2v1h-2zM854 291h1v1h-1zM843 291h1v1h-1zM920 396h2v1h-2zM921 395h2v1h-2zM919 395h1v1h-1zM921 394h2v1h-2zM919 394h1v1h-1zM921 393h3v1h-3zM918 393h1v1h-1zM921 392h3v1h-3zM918 392h1v1h-1zM920 391h5v1h-5zM917 391h1v1h-1zM923 390h3v1h-3zM918 390h2v1h-2zM916 390h1v1h-1zM924 389h2v1h-2zM916 389h2v1h-2zM926 388h1v1h-1zM915 388h1v1h-1z" fill="#ff0000"/>
<path d="M8.5 558 L145.5 669 L241.5 394 L329.5 491 L401.5 386.5 L441.5 514 L561.5 260 L649.5 345 L801.5 137 L921.5 384 L977.5 252" stroke="#0000cd" stroke-width="2" fill="none" stroke-linejoin="round"/>
<path d="M9 520 L18 525 L34 535 L41 537 L50 541.5 L57 547.5 L80.6 559 L96.7 562.3 L112.8 566.3 L121.5 570 L129 573.4 L137.6 581.5 L143.3 584 L150 591 L161 599.4 L170.7 599.4 L186 594 L221.8 560 L230 549 L264.8 504 L285.4 481 L301.5 456 L312.2 443.4 L321.2 440.7 L330.2 438 L346.3 441.6 L362.4 443.8 L390 445.6 L398 444.3 L421 440.4 L455 439 L466 432.7 L480.3 427.7 L496.4 424.3 L509 424.3 L519.7 426.4 L532.2 423.7 L545.7 423.2 L552 417.5 L568 408.5 L586 393.3 L610 376.3 L616 370 L630.3 356 L649 339 L666 320.2 L673.3 316.6 L682.2 311.2 L689.4 305 L698.4 302.6 L709 297.8 L723.4 288 L745 278 L760 263.8 L777.8 246 L790.3 233.8 L804.6 223 L815.4 215 L826.1 208.7 L836.9 204.2 L847.6 203.3 L862 206 L874.5 207 L882.5 208.4 L890.6 213.2 L899.6 221.3 L908.5 233.8 L915.7 246 L920.3 251.5 L929.3 263.2 L941.8 276.6 L954.3 288.2 L966.9 295.4 L977.6 299.3" stroke="#ff0000" stroke-width="3.2" fill="none" stroke-linejoin="round" shape-rendering="auto"/>
<path d="M9.5 525V546 M17.5 525V537 M25.5 531V564 M33.5 550V587 M41.5 560V582 M49.5 558V581 M57.5 559V586 M65.5 578V588 M73.5 554V592 M81.5 580V624 M89.5 577V603 M97.5 583V606 M105.5 589V608 M113.5 588V597 M111 593.5h5 M121.5 582V614 M129.5 596V627 M137.5 599V653 M145.5 633V669 M153.5 647V661 M161.5 639V649 M169.5 538V643 M177.5 519V555 M185.5 518V548 M193.5 435V548 M201.5 428V463 M209.5 430V444 M217.5 416V458 M225.5 409V454 M233.5 410V454 M241.5 394V428 M249.5 399V417 M257.5 397V406 M265.5 398V421 M273.5 409V449 M281.5 420V467 M289.5 442V473 M297.5 451V472 M305.5 443V456 M321.5 436V476 M329.5 458V490 M337.5 464V482 M345.5 468V485 M353.5 461V474 M361.5 446V476 M369.5 433V468 M377.5 416V441 M385.5 414V435 M393.5 389V434 M401.5 386V402 M409.5 390V402 M417.5 389V410 M425.5 403V417 M433.5 410V463 M441.5 453V514 M439 456.5h5 M449.5 428V460 M457.5 408V440 M465.5 402V432 M473.5 398V412 M471 406.5h5 M481.5 387V413 M479 406.5h5 M489.5 403V454 M497.5 427V456 M505.5 433V455 M513.5 439V468 M521.5 455V466 M529.5 372V459 M537.5 369V404 M545.5 350V394 M553.5 269V333 M561.5 260V325 M569.5 300V339 M577.5 326V339 M575 334.5h5 M585.5 318V339 M593.5 320V342 M601.5 297V336 M609.5 285V328 M617.5 266V320 M625.5 268V285 M623 278.5h5 M633.5 271V316 M641.5 296V311 M649.5 293V345 M657.5 270V330 M665.5 266V317 M673.5 294V315 M681.5 280V312 M689.5 280V297 M697.5 253V296 M705.5 243V270 M713.5 223V261 M721.5 226V240 M719 236.5h5 M729.5 228V257 M737.5 232V254 M745.5 190V246 M753.5 180V219 M761.5 151V202 M769.5 158V179 M767 170.5h5 M777.5 153V175 M785.5 149V163 M793.5 158V216 M801.5 137V205 M809.5 145V202 M817.5 183V208 M825.5 200V212 M823 206.5h5 M833.5 205V212 M841.5 202V258 M849.5 225V287 M857.5 223V274 M865.5 253V274 M863 267.5h5 M873.5 252V281 M881.5 253V272 M889.5 258V303 M897.5 270V342 M905.5 325V362 M913.5 354V383 M921.5 357V384 M929.5 352V364 M937.5 301V364 M945.5 282V341 M953.5 295V322 M961.5 281V302 M969.5 263V298 M977.5 252V272" stroke="#000" stroke-width="1" fill="none"/>
<path d="M15 527h5v7h-5z M23 533h5v20h-5z M31 552h5v29h-5z M47 563h5v13h-5z M55 570h5v11h-5z M63 581h5v3h-5z M71 583h5v3h-5z M79 585h5v13h-5z M95 585h5v19h-5z M119 593h5v8h-5z M127 600h5v11h-5z M135 611h5v27h-5z M143 638h5v23h-5z M223 436h5v9h-5z M255 400h5v4h-5z M263 403h5v18h-5z M271 420h5v13h-5z M279 432h5v12h-5z M287 444h5v16h-5z M319 443h5v33h-5z M335 465h5v10h-5z M351 468h5v5h-5z M383 423h5v1h-5z M407 395h5v7h-5z M415 400h5v4h-5z M423 403h5v14h-5z M431 417h5v41h-5z M487 406h5v38h-5z M503 441h5v14h-5z M511 456h5v7h-5z M535 377h5v7h-5z M543 383h5v7h-5z M559 286h5v34h-5z M567 320h5v14h-5z M591 322h5v4h-5z M607 306h5v11h-5z M631 292h5v14h-5z M647 300h5v29h-5z M663 274h5v32h-5z M727 235h5v19h-5z M783 159h5v3h-5z M791 161h5v37h-5z M807 151h5v39h-5z M815 189h5v17h-5z M831 206h5v6h-5z M839 212h5v29h-5z M855 236h5v30h-5z M879 253h5v13h-5z M887 266h5v23h-5z M895 289h5v47h-5z M903 335h5v25h-5z M911 359h5v24h-5z M927 357h5v7h-5z" fill="#000"/>
<path d="M7.5 527.5h4v10h-4z M39.5 564.5h4v16h-4z M87.5 585.5h4v12h-4z M103.5 592.5h4v11h-4z M151.5 648.5h4v10h-4z M159.5 644.5h4v4h-4z M167.5 542.5h4v100h-4z M175.5 532.5h4v9h-4z M183.5 521.5h4v11h-4z M191.5 450.5h4v71h-4z M199.5 442.5h4v7h-4z M207.5 438.5h4v3h-4z M215.5 436.5h4v2h-4z M231.5 425.5h4v19h-4z M239.5 408.5h4v15h-4z M247.5 400.5h4v7h-4z M295.5 456.5h4v8h-4z M303.5 443.5h4v12h-4z M327.5 463.5h4v13h-4z M343.5 468.5h4v12h-4z M359.5 462.5h4v7h-4z M367.5 440.5h4v20h-4z M375.5 430.5h4v8h-4z M391.5 398.5h4v23h-4z M399.5 396.5h4v2h-4z M447.5 440.5h4v15h-4z M455.5 412.5h4v27h-4z M463.5 406.5h4v20h-4z M495.5 442.5h4v2h-4z M519.5 456.5h4v6h-4z M527.5 377.5h4v78h-4z M551.5 286.5h4v27h-4z M583.5 322.5h4v10h-4z M599.5 306.5h4v19h-4z M615.5 278.5h4v37h-4z M639.5 300.5h4v5h-4z M655.5 274.5h4v54h-4z M671.5 298.5h4v7h-4z M679.5 296.5h4v2h-4z M687.5 281.5h4v14h-4z M695.5 259.5h4v21h-4z M703.5 248.5h4v10h-4z M711.5 235.5h4v12h-4z M735.5 239.5h4v14h-4z M743.5 212.5h4v26h-4z M751.5 191.5h4v20h-4z M759.5 170.5h4v20h-4z M775.5 159.5h4v10h-4z M799.5 152.5h4v45h-4z M847.5 236.5h4v4h-4z M871.5 253.5h4v23h-4z M919.5 357.5h4v25h-4z M935.5 333.5h4v29h-4z M943.5 317.5h4v15h-4z M951.5 302.5h4v14h-4z M959.5 295.5h4v6h-4z M967.5 270.5h4v24h-4z M975.5 256.5h4v13h-4z" fill="#fff" stroke="#000" stroke-width="1"/>
<path d="M313.5 428V454M312 443.5h4" stroke="#00ff00" stroke-width="1" fill="none"/>
<rect x="6" y="109" width="2" height="575" fill="#fff"/><rect x="8" y="109" width="1" height="575" fill="#000"/>
<path d="M9 228.5H1239M9 259.5H1239" stroke="#22c322" stroke-width="1" stroke-dasharray="9 6 3 6" fill="none"/>
<rect x="9" y="216" width="1231" height="2" fill="#0000cd"/><rect x="9" y="254" width="1231" height="2" fill="#0000cd"/><rect x="9" y="256" width="1231" height="1" fill="#778899"/>
<path d="M987 110H997L992 115Z" fill="#708090" shape-rendering="auto"/>
<path d="M12 116h8l-4 4.5z" fill="#000"/>
</svg>
<div class="ct fit" style="letter-spacing:-0.432px;left:1245px;top:113px">1.50480</div>
<div class="ct fit" style="letter-spacing:-0.432px;left:1245px;top:146px">1.50070</div>
<div class="ct fit" style="letter-spacing:-0.432px;left:1245px;top:179px">1.49670</div>
<div class="ct fit" style="letter-spacing:-0.432px;left:1245px;top:245px">1.48870</div>
<div class="ct fit" style="letter-spacing:-0.432px;left:1245px;top:278px">1.48470</div>
<div class="ct fit" style="letter-spacing:-0.432px;left:1245px;top:311px">1.48070</div>
<div class="ct fit" style="letter-spacing:-0.432px;left:1245px;top:344px">1.47660</div>
<div class="ct fit" style="letter-spacing:-0.432px;left:1245px;top:377px">1.47260</div>
<div class="ct fit" style="letter-spacing:-0.432px;left:1245px;top:410px">1.46860</div>
<div class="ct fit" style="letter-spacing:-0.432px;left:1245px;top:443px">1.46460</div>
<div class="ct fit" style="letter-spacing:-0.432px;left:1245px;top:476px">1.46060</div>
<div class="ct fit" style="letter-spacing:-0.432px;left:1245px;top:509px">1.45660</div>
<div class="ct fit" style="letter-spacing:-0.432px;left:1245px;top:542px">1.45260</div>
<div class="ct fit" style="letter-spacing:-0.432px;left:1245px;top:575px">1.44850</div>
<div class="ct fit" style="letter-spacing:-0.432px;left:1245px;top:608px">1.44450</div>
<div class="ct fit" style="letter-spacing:-0.432px;left:1245px;top:641px">1.44050</div>
<div class="ct fit" style="letter-spacing:-0.432px;left:1245px;top:674px">1.43650</div>
<div class="pl fit" style="letter-spacing:-0.432px;top:211px">1.49280</div>
<div class="pl fit" style="letter-spacing:-0.432px;top:249px;height:12px;border-bottom:1px solid #000">1.48819</div>
<div class="ct" style="left:8px;top:687px;letter-spacing:-0.33px">13 Dec 2013</div>
<div class="ct" style="left:72px;top:687px;letter-spacing:-0.33px">16 Dec 08:00</div>
<div class="ct" style="left:136px;top:687px;letter-spacing:-0.33px">17 Dec 16:00</div>
<div class="ct" style="left:200px;top:687px;letter-spacing:-0.33px">19 Dec 00:00</div>
<div class="ct" style="left:264px;top:687px;letter-spacing:-0.33px">20 Dec 08:00</div>
<div class="ct" style="left:328px;top:687px;letter-spacing:-0.33px">23 Dec 16:00</div>
<div class="ct" style="left:392px;top:687px;letter-spacing:-0.33px">26 Dec 13:00</div>
<div class="ct" style="left:456px;top:687px;letter-spacing:-0.33px">27 Dec 20:00</div>
<div class="ct" style="left:520px;top:687px;letter-spacing:-0.33px">31 Dec 04:00</div>
<div class="ct" style="left:584px;top:687px;letter-spacing:-0.33px">3 Jan 00:00</div>
<div class="ct" style="left:648px;top:687px;letter-spacing:-0.33px">6 Jan 08:00</div>
<div class="ct" style="left:712px;top:687px;letter-spacing:-0.33px">7 Jan 16:00</div>
<div class="ct" style="left:776px;top:687px;letter-spacing:-0.33px">9 Jan 00:00</div>
<div class="ct" style="left:840px;top:687px;letter-spacing:-0.33px">10 Jan 08:00</div>
<div class="ct" style="left:904px;top:687px;letter-spacing:-0.33px">13 Jan 16:00</div>
<div class="ct" style="left:968px;top:687px;letter-spacing:-0.33px">15 Jan 00:00</div>
<div class="ct fit" style="letter-spacing:-0.22px;left:23.6px;top:113px">GBPCHF,H4</div>
<div class="ct fit" style="letter-spacing:-0.242px;left:83.3px;top:113px">1.48641 1.48858 1.48622 1.48811</div>
<div class="ct fit" style="letter-spacing:-0.104px;left:14.5px;top:217px">#1011185 sell limit 0.20</div>
<div class="ct fit" style="letter-spacing:-0.131px;left:14.5px;top:248px">#1011184 sell 0.20</div>
<div style="left:9px;top:254px;width:90px;height:2px;background:#0000cd"></div><div style="left:9px;top:256px;width:90px;height:1px;background:#778899"></div>
<div style="left:6px;top:701px;width:1277px;height:1px;background:#f0f0f0"></div>
<div style="left:6px;top:703px;width:1278px;height:1px;background:#000"></div>
<div style="left:6px;top:704px;width:1276px;height:18px;background:#e1e1e1"></div><div style="left:1282px;top:704px;width:2px;height:19px;background:#f6f6f6"></div>
<div style="left:6px;top:722px;width:1277px;height:1px;background:#f0f0f0"></div>
<div style="left:4px;top:723px;width:1280px;height:1px;background:#fff"></div>
<div style="left:956px;top:703px;width:81px;height:19px;background:#fff;border:1px solid #000;border-top:0"></div>
<div class="tab fit" style="letter-spacing:-0.753px;left:17.9px">EURUSD,H1</div>
<div class="tab fit" style="letter-spacing:-0.448px;left:98.0px">USDCHF,H4</div>
<div class="tab fit" style="letter-spacing:-0.898px;left:179.7px">GBPUSD,H1</div>
<div class="tab fit" style="letter-spacing:-0.523px;left:258.3px">USDJPY,H4</div>
<div class="tab fit" style="letter-spacing:-0.673px;left:335.1px">EURGBP,H4</div>
<div class="tab fit" style="letter-spacing:-0.65px;left:414.5px">AUDNZD,H1</div>
<div class="tab fit" style="letter-spacing:-0.712px;left:494.0px">GBPJPY,H1</div>
<div class="tab fit" style="letter-spacing:-0.448px;left:569.8px">EURCHF,H4</div>
<div class="tab fit" style="letter-spacing:-0.626px;left:649.9px">USDCHF,H1</div>
<div class="tab fit" style="letter-spacing:-0.634px;left:730.1px">USDJPY,H1</div>
<div class="tab fit" style="letter-spacing:-0.72px;left:806.9px">USDCAD,H4</div>
<div class="tab fit" style="letter-spacing:-0.598px;left:886.2px">AUDUSD,H4</div>
<div class="tab fit" style="letter-spacing:-0.425px;left:1047.0px">EURJPY,Daily</div>
<div class="tab fit" style="letter-spacing:-0.619px;left:1133.9px">XAUUSD,H4</div>
<div class="tsep" style="left:88px"></div>
<div class="tsep" style="left:168px"></div>
<div class="tsep" style="left:248px"></div>
<div class="tsep" style="left:324px"></div>
<div class="tsep" style="left:404px"></div>
<div class="tsep" style="left:484px"></div>
<div class="tsep" style="left:560px"></div>
<div class="tsep" style="left:640px"></div>
<div class="tsep" style="left:720px"></div>
<div class="tsep" style="left:796px"></div>
<div class="tsep" style="left:876px"></div>
<div class="tsep" style="left:1124px"></div>
<div class="tsep" style="left:1204px"></div>
<div class="tab fit" style="letter-spacing:-0.583px;left:967.2px;color:#000">GBPCHF,H4</div>
<div style="left:1256px;top:710px;width:0;height:0;border:3px solid transparent;border-right:3.5px solid #a4a4a4;border-left:0"></div>
<div style="left:1273px;top:710px;width:0;height:0;border:3px solid transparent;border-left:3.5px solid #a4a4a4;border-right:0"></div>
<div style="left:4px;top:724px;width:1280px;height:20px;background:#e3e3e3"></div>
<div class="st fit" style="letter-spacing:-0.051px;left:6px">Для справки, нажмите F1</div>
<div class="st fit" style="letter-spacing:0.077px;left:568px">Default</div>
<div class="st fit" style="letter-spacing:-0.0px;left:1178.2px">246/0 kb</div>
<div class="ssep" style="left:563px"></div>
<div class="ssep" style="left:672px"></div>
<div class="ssep" style="left:774px"></div>
<div class="ssep" style="left:846px"></div>
<div class="ssep" style="left:917px"></div>
<div class="ssep" style="left:986px"></div>
<div class="ssep" style="left:1056px"></div>
<div class="ssep" style="left:1122px"></div>
<svg width="1288" height="748" viewBox="0 0 1288 748" style="position:absolute;left:0;top:0"><rect x="1128" y="740.0" width="2" height="1.0" fill="#a01000"/><rect x="1128" y="729" width="2" height="10.0" fill="#5c7e00"/><rect x="1131" y="738.6" width="2" height="2.4" fill="#a01000"/><rect x="1131" y="729" width="2" height="8.6" fill="#5c7e00"/><rect x="1134" y="737.3" width="2" height="3.7" fill="#a01000"/><rect x="1134" y="729" width="2" height="7.3" fill="#5c7e00"/><rect x="1137" y="736.0" width="2" height="5.1" fill="#a01000"/><rect x="1137" y="729" width="2" height="6.0" fill="#5c7e00"/><rect x="1140" y="734.6" width="2" height="6.4" fill="#a01000"/><rect x="1140" y="729" width="2" height="4.6" fill="#5c7e00"/><rect x="1143" y="733.2" width="2" height="7.8" fill="#a01000"/><rect x="1143" y="729" width="2" height="3.2" fill="#5c7e00"/><rect x="1146" y="731.9" width="2" height="9.1" fill="#a01000"/><rect x="1146" y="729" width="2" height="1.9" fill="#5c7e00"/><rect x="1149" y="730.5" width="2" height="10.5" fill="#a01000"/><rect x="1149" y="729" width="2" height="1.2" fill="#5c7e00"/><path d="M1268.3 744L1284 728.3M1272.3 744L1284 732.3M1276.3 744L1284 736.3M1280.3 744L1284 740.3" stroke="#9a9a9a" stroke-width="1.6"/><path d="M1269.8 744L1284 729.8M1273.8 744L1284 733.8M1277.8 744L1284 737.8M1281.8 744L1284 741.8" stroke="#fff" stroke-width="1.1"/></svg>
<div style="left:4px;top:744px;width:1280px;height:4px;background:linear-gradient(#68686a 0,#68686a 1px,#8d8e92 1px,#86878b 4px)"></div>
<div style="left:4px;top:744px;width:41px;height:4px;background:linear-gradient(#ffb050,#f08010);border-top-right-radius:3px"></div>
</div></body></html>
